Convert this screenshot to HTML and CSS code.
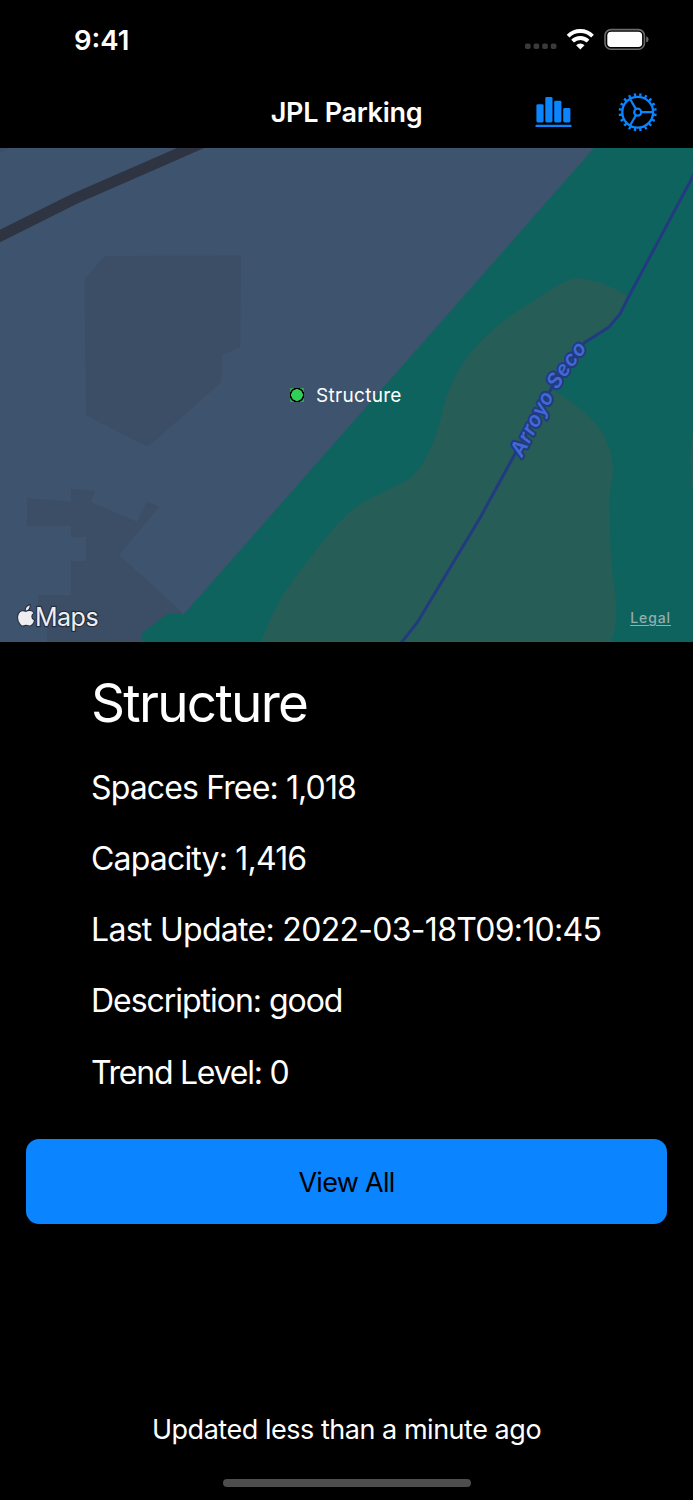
FILE: index.html
```
<!DOCTYPE html>
<html lang="en">
<head>
    <meta charset="UTF-8">
    <meta name="viewport" content="width=device-width, initial-scale=1.0">
    <title>JPL Parking</title>
    <link rel="stylesheet" href="styles.css">
</head>
<body>

    <div class="status-bar">
        <span class="time">9:41</span>
        <svg class="status-icons" width="126" height="24" viewBox="524 28 126 24">
            <g fill="#3a3a3a">
                <rect x="525" y="43.5" width="5.6" height="5.6" rx="1.8"/>
                <rect x="533.6" y="43.5" width="5.6" height="5.6" rx="1.8"/>
                <rect x="542.2" y="43.5" width="5.6" height="5.6" rx="1.8"/>
                <rect x="550.8" y="43.5" width="5.6" height="5.6" rx="1.8"/>
            </g>
            <g fill="none" stroke="#fff" stroke-width="3.9">
                <path d="M568.1 36.1a17.3 17.3 0 0 1 24.4 0"/>
                <path d="M572.6 41.200a11 11 0 0 1 15.4 0"/>
            </g>
            <path d="M580.3 49.5l-4.2-4.3a6 6 0 0 1 8.4 0z" fill="#fff"/>
            <rect x="605" y="29.6" width="39.4" height="19.6" rx="6" fill="none" stroke="#6b6b6b" stroke-width="1.6"/>
            <rect x="607.3" y="31.8" width="34.8" height="15.2" rx="3.8" fill="#fff"/>
            <path d="M646.2 36.3q2.4.8 2.4 3.1t-2.4 3.1z" fill="#6b6b6b"/>
        </svg>
    </div>

    <header class="nav-bar">
        <h1>JPL Parking</h1>
        <div class="nav-actions">
            <svg width="38" height="36" viewBox="535 94 38 36" fill="#0a84ff">
                <rect x="536.4" y="104.2" width="7.2" height="18.3" rx="1.4"/>
                <rect x="545.3" y="97" width="7.2" height="25.5" rx="1.4"/>
                <rect x="554.2" y="100.8" width="7.2" height="21.7" rx="1.4"/>
                <rect x="563.2" y="108" width="7.2" height="14.5" rx="1.4"/>
                <rect x="535.4" y="124.7" width="36.2" height="2.4" rx="1.2"/>
            </svg>
            <svg width="40" height="40" viewBox="-19.7 -20.2 40 40" fill="none" stroke="#0a84ff">
                <circle r="15.4" stroke-width="2.3"/>
                <circle r="17.5" stroke-width="3.2" pathLength="20" stroke-dasharray=".42 .58" stroke-dashoffset="-.29"/>
                <circle r="3.5" stroke-width="2.2"/>
                <path d="M3.8 0H15M-1.9 -3.3L-7.5 -13M-1.9 3.3L-7.5 13" stroke-width="2.2"/>
            </svg>
        </div>
    </header>

    <div class="map">
        <svg class="map-tiles" width="693" height="494" viewBox="0 148 693 494">
            <rect y="148" width="693" height="494" fill="#3e536d"/>
            <path d="M0 148H8L0 153z" fill="#3b4f66"/>

            <!-- buildings -->
            <g fill="#3b4e66">
                <path d="M105 256L241 255.5L240.3 347L222 355L221.5 382L150 445Q147 447 143 444.500L86 415L84.500 279z"/>
                <path d="M27 498L71 502V489L95 491L91 502L137 522L147 501L159 507L119 555L183 613L142 642H47V618L38 616V595H71V561H86V537H71V526H27z"/>
            </g>

            <!-- road -->
            <path d="M-5 238.500L74 199L161 161L204 142" fill="none" stroke="#2e3441" stroke-width="11"/>

            <!-- park and wash -->
            <path d="M594 148H693V642H142V633L167 614Q175 613 184 614z" fill="#0f635f"/>
            <path d="M261 642Q270 617 284 593C300 570 318 547 335 527Q352 507 371 498L406 481Q418 473 428 454C441 429 441 407 450 388C463 355 492 325 532 302Q564 279 578 278Q604 281 628 296L620 314L609 327L584 343L557 375L551 389C577 404 601 424 606 440Q614 458 613 474Q608 496 610 525Q610 560 615 592Q619 620 611 642z" fill="#275d57"/>
            <path d="M693 430Q688 463 693 491z" fill="#275d57"/>
            <path d="M696 170L692 178L628 298L620 314L609 327L584 343Q563 363 550 391L516 452L480 518L417 623L401 643" fill="none" stroke="#223b80" stroke-width="3"/>

            <path id="river" d="M522 458L550 404Q562 378 596 338" fill="none"/>
            <text class="river-name"><textPath href="#river">Arroyo Seco</textPath></text>
        </svg>

        <div class="pin">
            <span class="pin-dot"></span>
            <span class="pin-label">Structure</span>
        </div>

        <div class="map-logo">
            <svg width="18" height="23" viewBox="0 0 18 23">
                <path d="M12.600 1.200Q12.900 5.800 8.800 6.500Q8.600 2.700 12.600 1.200zM9 8Q10.500 6.900 12.800 7Q15.300 7.200 16.400 9Q14.200 10.300 14.300 12.700Q14.500 15.500 17 16.500Q16.300 18.700 14.900 20.300Q13.500 21.900 11.800 21.200Q9.300 20.200 7.500 21.100Q5.200 22.200 3.600 20.300Q1 17.200 1 13.200Q1 9.800 3.400 7.900Q5.300 6.500 9 8z"/>
            </svg>
            <span>Maps</span>
        </div>
        <a class="legal">Legal</a>
    </div>

    <main class="details">
        <h2>Structure</h2>
        <p class="free">Spaces Free: 1,018</p>
        <p class="capacity">Capacity: 1,416</p>
        <p class="update">Last Update: 2022-03-18T09:10:45</p>
        <p class="description">Description: good</p>
        <p class="trend">Trend Level: 0</p>
    </main>

    <button class="view-all">View All</button>

    <footer>
        <p>Updated less than a minute ago</p>
        <div class="home-bar"></div>
    </footer>

</body>
</html>
```

FILE: styles.css
```
* { margin: 0; padding: 0; box-sizing: border-box; }

body {
    width: 693px;
    height: 1500px;
    display: flex;
    flex-direction: column;
    overflow: hidden;
    background: #000;
    color: #fff;
    font-family: Inter, sans-serif;
}

svg { display: block; }

/* --- TOP BARS --- */
.status-bar {
    height: 80px;
    padding: 0 43px 0 74px;
    display: flex;
    justify-content: space-between;
    align-items: center;
}

.time { font-size: 27.5px; font-weight: 600; padding-bottom: 1px; }

.nav-bar {
    height: 68px;
    padding: 0 35px 4px 0;
    display: grid;
    grid-template-columns: 1fr auto 1fr;
    align-items: center;
}

.nav-bar h1 {
    grid-column: 2;
    font-size: 27px;
    font-weight: 600;
    letter-spacing: -0.3px;
    margin-left: 35px;
}

.nav-actions {
    display: flex;
    justify-content: flex-end;
    align-items: center;
    gap: 45px;
}

/* --- MAP --- */
.map { position: relative; height: 494px; }

.river-name {
    font-size: 20.5px;
    font-weight: 600;
    font-style: italic;
    letter-spacing: 0.6px;
    fill: #4169d6;
    stroke: #223b80;
    stroke-width: 4px;
    stroke-linejoin: round;
    paint-order: stroke;
}

.pin {
    position: absolute;
    left: 290px;
    top: 235px;
    display: flex;
    align-items: center;
    gap: 12px;
}

.pin-dot {
    width: 14px;
    height: 14px;
    margin-bottom: 1px;
    background: radial-gradient(circle, #30d158 5.5px, #000 6px, #000 7px, #30a058 7.5px);
}

.pin-label { font-size: 19px; line-height: 24px; letter-spacing: 0.3px; padding-top: 1px; }

.map-logo {
    position: absolute;
    left: 17px;
    top: 454px;
    display: flex;
    align-items: center;
    color: #eeeef2;
    font-size: 25px;
    line-height: 30px;
    letter-spacing: -0.5px;
}

.map-logo span {
    -webkit-text-stroke: 2.4px #26303d;
    paint-order: stroke;
}

.map-logo svg { margin-bottom: 4px; overflow: visible; }

.map-logo path {
    fill: #eeeef2;
    stroke: #26303d;
    stroke-width: 2px;
    paint-order: stroke;
}

.legal {
    position: absolute;
    right: 22px;
    top: 461px;
    font-size: 14px;
    font-weight: 500;
    line-height: 18px;
    letter-spacing: 0.9px;
    color: #8fb0ae;
    text-decoration: underline;
    text-underline-offset: 2px;
}

/* --- DETAILS --- */
.details { padding: 27px 91px 0; white-space: nowrap; }

.details h2 {
    font-size: 53px;
    font-weight: 400;
    line-height: 68px;
    letter-spacing: -1.7px;
    margin-bottom: 14.5px;
}

.details p {
    font-size: 32px;
    line-height: 71.25px;
}

.free { letter-spacing: -0.87px; }
.capacity { letter-spacing: -0.82px; }
.update { letter-spacing: -0.7px; }
.description { letter-spacing: -1.03px; }
.trend { letter-spacing: -1.25px; }

.view-all {
    height: 85px;
    margin: 31.5px 26px 0;
    padding-top: 1px;
    border: none;
    border-radius: 13px;
    background: #0a84ff;
    color: #000;
    font-family: inherit;
    font-size: 27px;
    letter-spacing: -0.7px;
}

footer {
    margin-top: auto;
    padding-bottom: 13px;
    display: flex;
    flex-direction: column;
    align-items: center;
    gap: 33px;
}

footer p { font-size: 27px; line-height: 32px; letter-spacing: -0.47px; }

.home-bar {
    width: 248px;
    height: 8px;
    border-radius: 4px;
    background: #4d4d4d;
}
```
